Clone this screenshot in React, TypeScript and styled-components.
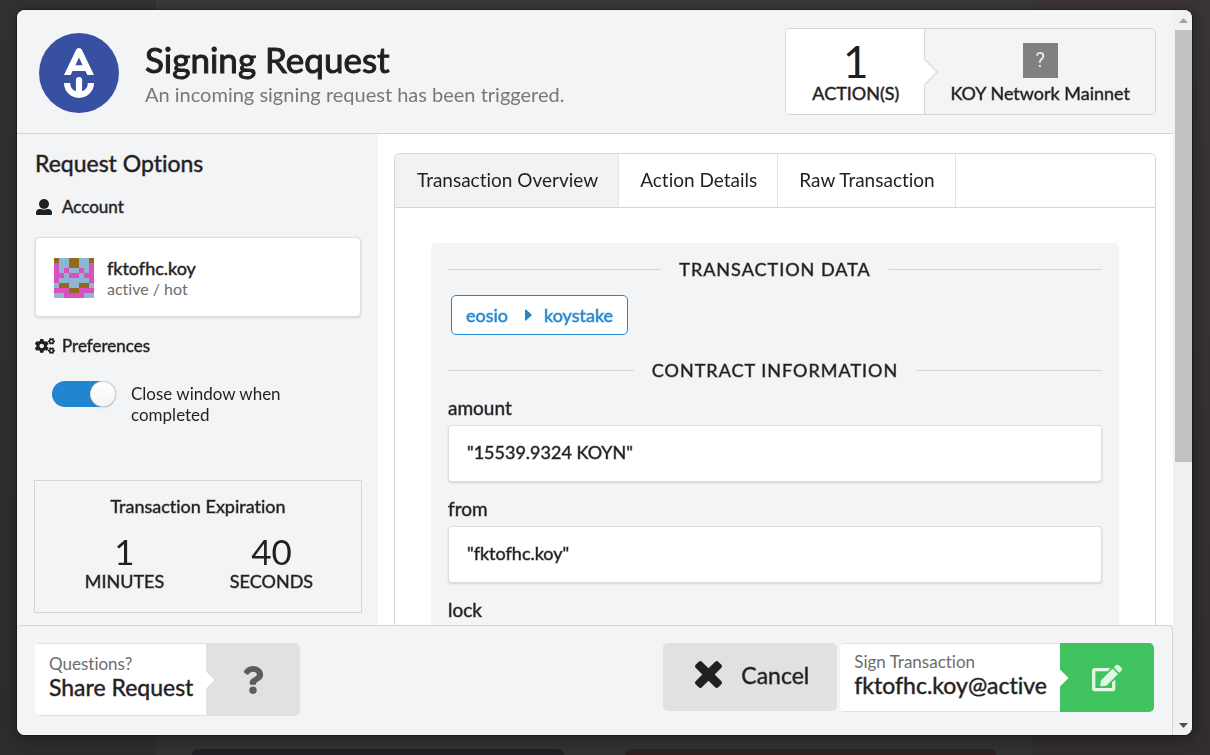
import React, { useState } from 'react';
import styled, { createGlobalStyle, css } from 'styled-components';
import { FaCogs, FaEdit, FaQuestion } from 'react-icons/fa';

const line = '#d4d5d6';
const panel = '#f3f4f6';
const ink = '#1f2021';
const muted = '#6c6d6e';

/* Regular letter shapes with a slightly heavier stem */
const strong = css`
  font-weight: 400;
  -webkit-text-stroke: 1px rgba(31, 32, 33, 0.45);
`;

const GlobalStyle = createGlobalStyle`
  *, *::before, *::after { box-sizing: border-box; }
  body { margin: 0; font-family: Lato, 'Helvetica Neue', Arial, sans-serif; color: ${ink}; font-variant-ligatures: none; }
  button { font: inherit; color: inherit; cursor: pointer; border: 0; margin: 0; }
  h1, h2, h3, p { margin: 0; font-weight: inherit; }
`;

const Backdrop = styled.div`
  min-height: 100vh;
  display: grid;
  grid-template-columns: 156px 1fr 178px;
  background: linear-gradient(#323235, #2c2d2f);
`;
const BackdropMain = styled.div`
  grid-column: 2;
  display: flex;
  align-items: flex-end;
  gap: 61px;
  padding: 0 36px;
  background: linear-gradient(#3a3a3a, #323232);
`;
const BackdropSide = styled.div`
  background: linear-gradient(#3a3435, #322e2f);
`;
const BackdropCard = styled.div<{ $tone: string }>`
  flex: 1;
  height: 6px;
  border-radius: 6px 6px 0 0;
  background: ${(p) => p.$tone};
`;

const Modal = styled.div`
  position: fixed;
  inset: 10px 18px 20px 17px;
  display: flex;
  overflow: hidden;
  border-radius: 8px;
  background: #f1f1f1;
  box-shadow: 0 0 0 1px rgba(0, 0, 0, 0.3), 1px 3px 15px 2px rgba(0, 0, 0, 0.3);
`;
const Content = styled.div`
  flex: 1;
  min-width: 0;
  display: flex;
  flex-direction: column;
`;

const ScrollTrack = styled.div`
  width: 19px;
  display: flex;
  flex-direction: column;
  align-items: flex-end;
  background: #f1f1f1;
`;
const ScrollThumb = styled.div`
  width: 17px;
  flex: 0 1 432px;
  margin-bottom: auto;
  background: #c1c1c1;
`;
const ScrollArrow = styled.svg`
  flex: none;
  width: 17px;
  height: 20px;
`;

const Header = styled.header`
  display: flex;
  align-items: center;
  padding: 18px 17px 18px 22px;
  background: ${panel};
  border-bottom: 1px solid ${line};
`;
const Logo = styled.svg`
  flex: none;
  width: 80px;
  height: 80px;
  margin-top: 2px;
`;
const Heading = styled.div`
  flex: 1;
  padding-left: 26px;
`;
const Title = styled.h1`
  font-size: 35px;
  line-height: 44px;
  font-weight: 400;
  -webkit-text-stroke: 1px ${ink};
`;
const Subtitle = styled.p`
  font-size: 20px;
  line-height: 26px;
  color: #777879;
`;
const Summary = styled.div`
  display: flex;
  height: 87px;
  border: 1px solid ${line};
  border-radius: 5px;
`;
const SummaryStep = styled.div<{ $active?: boolean }>`
  position: relative;
  display: flex;
  flex-direction: column;
  align-items: center;
  justify-content: flex-end;
  padding: 0 25px 10px;
  font-size: 18px;
  line-height: 21px;
  ${strong}
  border-radius: 4px;
  ${(p) =>
    p.$active &&
    `
    background: #fff;
    border-right: 1px solid ${line};
    border-radius: 4px 0 0 4px;
    padding-left: 26px;
    &::after {
      content: '';
      position: absolute;
      right: -10px;
      top: 50%;
      width: 19px;
      height: 19px;
      background: #fff;
      border: solid ${line};
      border-width: 1px 1px 0 0;
      transform: translateY(-50%) rotate(45deg);
    }
  `}
`;
const SummaryCount = styled.div`
  font-size: 44px;
  line-height: 44px;
  font-weight: 400;
  -webkit-text-stroke: 0;
`;
const ChainLogo = styled.div`
  width: 35px;
  height: 35px;
  margin-bottom: 5px;
  display: grid;
  place-items: center;
  background: #808080;
  color: #eee;
  font-family: Roboto, sans-serif;
  font-size: 20px;
  -webkit-text-stroke: 0;
`;

const Body = styled.div`
  flex: 1;
  min-height: 0;
  display: flex;
  overflow: hidden;
  background: #fff;
`;
const Sidebar = styled.aside`
  flex: none;
  width: 361px;
  padding: 14px 16px 0 17px;
  background: ${panel};
`;
const SidebarTitle = styled.h2`
  padding-left: 1px;
  font-size: 23px;
  line-height: 30px;
  ${strong}
`;
const SectionTitle = styled.h3`
  display: flex;
  align-items: center;
  gap: 7px;
  font-size: 17px;
  line-height: 20px;
  ${strong}
  padding-left: 1px;
  margin-top: 19px;
  svg { width: 20px; height: 18px; stroke: none; }
`;
const Card = styled.div`
  background: #fff;
  border: 1px solid #dcdddf;
  border-radius: 4px;
  box-shadow: 0 1px 2px rgba(34, 36, 38, 0.15);
`;
const AccountCard = styled(Card)`
  display: flex;
  align-items: flex-start;
  gap: 13px;
  height: 80px;
  margin: 20px 1px 18px;
  padding: 20px 18px;
`;
const Identicon = styled.svg`
  width: 40px;
  height: 40px;
`;
const AccountName = styled.div`
  font-size: 18px;
  line-height: 20px;
  ${strong}
`;
const AccountKind = styled.div`
  font-size: 16px;
  line-height: 22px;
  color: ${muted};
`;
const Toggle = styled.label`
  display: flex;
  align-items: flex-start;
  gap: 15px;
  margin: 25px 60px 0 18px;
  font-size: 17px;
  line-height: 21px;
  cursor: pointer;
  span { padding-top: 2px; }
`;
const Switch = styled.input`
  appearance: none;
  flex: none;
  width: 64px;
  height: 26px;
  margin: 0;
  border-radius: 13px;
  background: #d4d5d6;
  display: flex;
  &:checked { background: #2185d0; justify-content: flex-end; }
  &::after {
    content: '';
    width: 26px;
    height: 26px;
    border-radius: 13px;
    background: linear-gradient(#fff, #f4f4f4);
    box-shadow: 0 1px 2px rgba(34, 36, 38, 0.15), inset 0 0 0 1px rgba(34, 36, 38, 0.15);
  }
`;
const Expiration = styled.section`
  margin: 55px 0 0;
  height: 133px;
  padding: 14px 16px 0;
  border: 1px solid ${line};
  text-align: center;
  font-size: 18px;
  line-height: 22px;
  ${strong}
`;
const Countdown = styled.div`
  display: grid;
  grid-template-columns: 1fr 1fr;
  margin-top: 16px;
`;
const CountdownValue = styled.div`
  font-size: 35px;
  line-height: 37px;
  font-weight: 400;
  -webkit-text-stroke: 0;
`;

const Details = styled.main`
  flex: 1;
  min-width: 0;
  padding: 19px 17px 0 16px;
`;
const Tabs = styled.div`
  display: flex;
  height: 55px;
  border: 1px solid ${line};
  border-radius: 5px 5px 0 0;
`;
const Tab = styled.button<{ $active?: boolean }>`
  padding: 0 20px 2px 21px;
  font-size: 19px;
  background: ${(p) => (p.$active ? '#f2f2f2' : '#fff')};
  border-right: 1px solid #e3e4e4;
  &:first-child { padding-left: 22px; border-radius: 4px 0 0 0; }
`;
const TabPanel = styled.div`
  padding: 35px 36px;
  border: solid ${line};
  border-width: 0 1px;
`;
const Sheet = styled.div`
  padding: 15px 17px 40px;
  border-radius: 5px;
  background: ${panel};
`;
const Divider = styled.h3`
  display: flex;
  align-items: center;
  gap: 18px;
  font-size: 18px;
  line-height: 22px;
  ${strong}
  letter-spacing: 1px;
  text-transform: uppercase;
  &::before, &::after {
    content: '';
    flex: 1;
    height: 1px;
    background: ${line};
  }
`;
const Contract = styled.button`
  display: flex;
  align-items: center;
  height: 40px;
  margin: 15px 3px 24px;
  padding: 0 14px;
  border: 1px solid #2185d0;
  border-radius: 5px;
  background: #fff;
  color: #2185d0;
  font-size: 18px;
  -webkit-text-stroke: 1px rgba(33, 133, 208, 0.5);
  svg { width: 7px; height: 12px; margin: 0 12px 0 17px; stroke: none; }
`;
const FieldName = styled.h3`
  margin-top: 15px;
  font-size: 19px;
  line-height: 24px;
  ${strong}
`;
const FieldValue = styled(Card)`
  height: 57px;
  margin-top: 5px;
  padding: 0 18px;
  font-size: 18px;
  line-height: 52px;
  ${strong}
`;

const Footer = styled.footer`
  display: flex;
  align-items: flex-start;
  height: 110px;
  padding: 17px 18px 0;
  background: ${panel};
  border: solid ${line};
  border-width: 1px 1px 0 0;
  border-radius: 5px 5px 0 0;
`;
const SplitButton = styled.button<{ $tall?: boolean }>`
  display: flex;
  align-items: stretch;
  padding: 0;
  height: ${(p) => (p.$tall ? 73 : 69)}px;
  border-radius: 5px;
  overflow: hidden;
  text-align: left;
`;
const SplitText = styled.span`
  position: relative;
  display: flex;
  flex-direction: column;
  justify-content: center;
  padding: 0 13px 7px 14px;
  background: #fff;
  border: solid #e0e1e2;
  border-width: 1px 0;
  font-size: 23px;
  line-height: 25px;
  ${strong}
  &::after {
    content: '';
    position: absolute;
    right: -6px;
    top: 50%;
    width: 12px;
    height: 12px;
    background: #fff;
    transform: translateY(-50%) rotate(45deg);
  }
  small { font-size: 17px; line-height: 23px; color: ${muted}; -webkit-text-stroke: 0; }
`;
const SplitIcon = styled.span<{ $positive?: boolean }>`
  display: grid;
  place-items: center;
  width: 94px;
  background: ${(p) => (p.$positive ? '#40c35f' : '#e0e1e2')};
  color: ${(p) => (p.$positive ? 'rgba(255, 255, 255, 0.85)' : '#5b5c5c')};
  svg { width: 30px; height: 28px; }
`;
const Cancel = styled.button`
  display: flex;
  align-items: center;
  gap: 19px;
  height: 68px;
  margin: 0 3px 0 auto;
  padding: 0 28px 5px 32px;
  border-radius: 5px;
  background: #e0e1e2;
  font-size: 23px;
  ${strong}
  svg { width: 27px; height: 27px; stroke: none; }
`;

const identicon = [
  'bllbbllb',
  'pllbbllp',
  'plpllplp',
  'pplpplpp',
  'pllllllp',
  'lbbllbbl',
  'pppbbppp',
  'llppppll',
];
const identiconColors: Record<string, string> = { b: '#92691f', l: '#8eb5d3', p: '#d951bd' };

const fields = [
  { name: 'amount', value: '"15539.9324 KOYN"' },
  { name: 'from', value: '"fktofhc.koy"' },
  { name: 'lock' },
];
const tabs = ['Transaction Overview', 'Action Details', 'Raw Transaction'];

export default function App() {
  const [closeWhenDone, setCloseWhenDone] = useState(true);
  const [tab, setTab] = useState(0);
  return (
    <>
      <GlobalStyle />
      <Backdrop>
        <BackdropMain>
          <BackdropCard $tone="#202125" />
          <BackdropCard $tone="#2e2021" />
        </BackdropMain>
        <BackdropSide />
      </Backdrop>
      <Modal role="dialog" aria-label="Signing Request">
        <Content>
          <Header>
            <Logo viewBox="0 0 80 80" aria-hidden="true">
              <circle cx="40" cy="40" r="40" fill="#3750a2" />
              <path
                d="M40 15a3.2 3.2 0 0 1 2.9 1.8L55 42h-6.7l-1.9-4H33.600l-1.900 4H25l12.100-25.200A3.200 3.200 0 0 1 40 15zm0 9.600L36.400 32.200h7.200z"
                fill="#fff"
              />
              <path
                d="M25 50h6.200a8.900 8.900 0 0 0 5.700 8.300V47a3.100 3.100 0 0 1 6.200 0v11.300a8.900 8.900 0 0 0 5.700-8.300H55a15 15 0 0 1-30 0z"
                fill="#fff"
              />
            </Logo>
            <Heading>
              <Title>Signing Request</Title>
              <Subtitle>An incoming signing request has been triggered.</Subtitle>
            </Heading>
            <Summary>
              <SummaryStep $active>
                <SummaryCount>1</SummaryCount>
                ACTION(S)
              </SummaryStep>
              <SummaryStep>
                <ChainLogo>?</ChainLogo>
                KOY Network Mainnet
              </SummaryStep>
            </Summary>
          </Header>
          <Body>
            <Sidebar>
              <SidebarTitle>Request Options</SidebarTitle>
              <SectionTitle>
                <svg viewBox="0 0 20 18" fill="currentColor" aria-hidden="true">
                  <circle cx="9" cy="6" r="5" />
                  <path d="M1 15a4 4 0 0 1 4-4h1a7 7 0 0 0 6 0h1a4 4 0 0 1 4 4v1a1 1 0 0 1-1 1H2a1 1 0 0 1-1-1z" />
                </svg>
                Account
              </SectionTitle>
              <AccountCard>
                <Identicon viewBox="0 0 8 8" shapeRendering="crispEdges" aria-hidden="true">
                  {identicon.map((row, y) =>
                    row.split('').map((c, x) => (
                      <rect key={`${x}-${y}`} x={x} y={y} width="1" height="1" fill={identiconColors[c]} />
                    )),
                  )}
                </Identicon>
                <div>
                  <AccountName>fktofhc.koy</AccountName>
                  <AccountKind>active / hot</AccountKind>
                </div>
              </AccountCard>
              <SectionTitle>
                <FaCogs aria-hidden="true" />
                Preferences
              </SectionTitle>
              <Toggle>
                <Switch
                  type="checkbox"
                  role="switch"
                  checked={closeWhenDone}
                  onChange={(e) => setCloseWhenDone(e.target.checked)}
                />
                <span>Close window when completed</span>
              </Toggle>
              <Expiration>
                Transaction Expiration
                <Countdown>
                  <div>
                    <CountdownValue>1</CountdownValue>
                    MINUTES
                  </div>
                  <div>
                    <CountdownValue>40</CountdownValue>
                    SECONDS
                  </div>
                </Countdown>
              </Expiration>
            </Sidebar>
            <Details>
              <Tabs role="tablist">
                {tabs.map((name, i) => (
                  <Tab key={name} role="tab" aria-selected={i === tab} $active={i === tab} onClick={() => setTab(i)}>
                    {name}
                  </Tab>
                ))}
              </Tabs>
              <TabPanel role="tabpanel">
                <Sheet>
                  <Divider>Transaction Data</Divider>
                  <Contract>
                    eosio
                    <svg viewBox="0 0 7 12" fill="currentColor" aria-hidden="true">
                      <path d="M0 1v10q0 1 1 .4L6.500 6.600q.6-.6 0-1.200L1 .6Q0 0 0 1z" />
                    </svg>
                    koystake
                  </Contract>
                  <Divider>Contract Information</Divider>
                  {fields.map(({ name, value }) => (
                    <React.Fragment key={name}>
                      <FieldName>{name}</FieldName>
                      <FieldValue>{value}</FieldValue>
                    </React.Fragment>
                  ))}
                </Sheet>
              </TabPanel>
            </Details>
          </Body>
          <Footer>
            <SplitButton $tall>
              <SplitText>
                <small>Questions?</small>
                Share Request
              </SplitText>
              <SplitIcon>
                <FaQuestion aria-hidden="true" />
              </SplitIcon>
            </SplitButton>
            <Cancel>
              <svg viewBox="302 366 1188 1188" fill="currentColor" aria-hidden="true">
                <path d="M1490 1322q0 40-28 68l-136 136q-28 28-68 28t-68-28l-294-294-294 294q-28 28-68 28t-68-28l-136-136q-28-28-28-68t28-68l294-294-294-294q-28-28-28-68t28-68l136-136q28-28 68-28t68 28l294 294 294-294q28-28 68-28t68 28l136 136q28 28 28 68t-28 68l-294 294 294 294q28 28 28 68z" />
              </svg>
              Cancel
            </Cancel>
            <SplitButton>
              <SplitText>
                <small>Sign Transaction</small>
                fktofhc.koy@active
              </SplitText>
              <SplitIcon $positive>
                <FaEdit aria-hidden="true" />
              </SplitIcon>
            </SplitButton>
          </Footer>
        </Content>
        <ScrollTrack aria-hidden="true">
          <ScrollArrow viewBox="0 0 17 20">
            <path d="M4 13h9L8.500 8z" fill="#a3a3a3" />
          </ScrollArrow>
          <ScrollThumb />
          <ScrollArrow viewBox="0 0 17 20">
            <path d="M4 8h9l-4.500 5z" fill="#505050" />
          </ScrollArrow>
        </ScrollTrack>
      </Modal>
    </>
  );
}
